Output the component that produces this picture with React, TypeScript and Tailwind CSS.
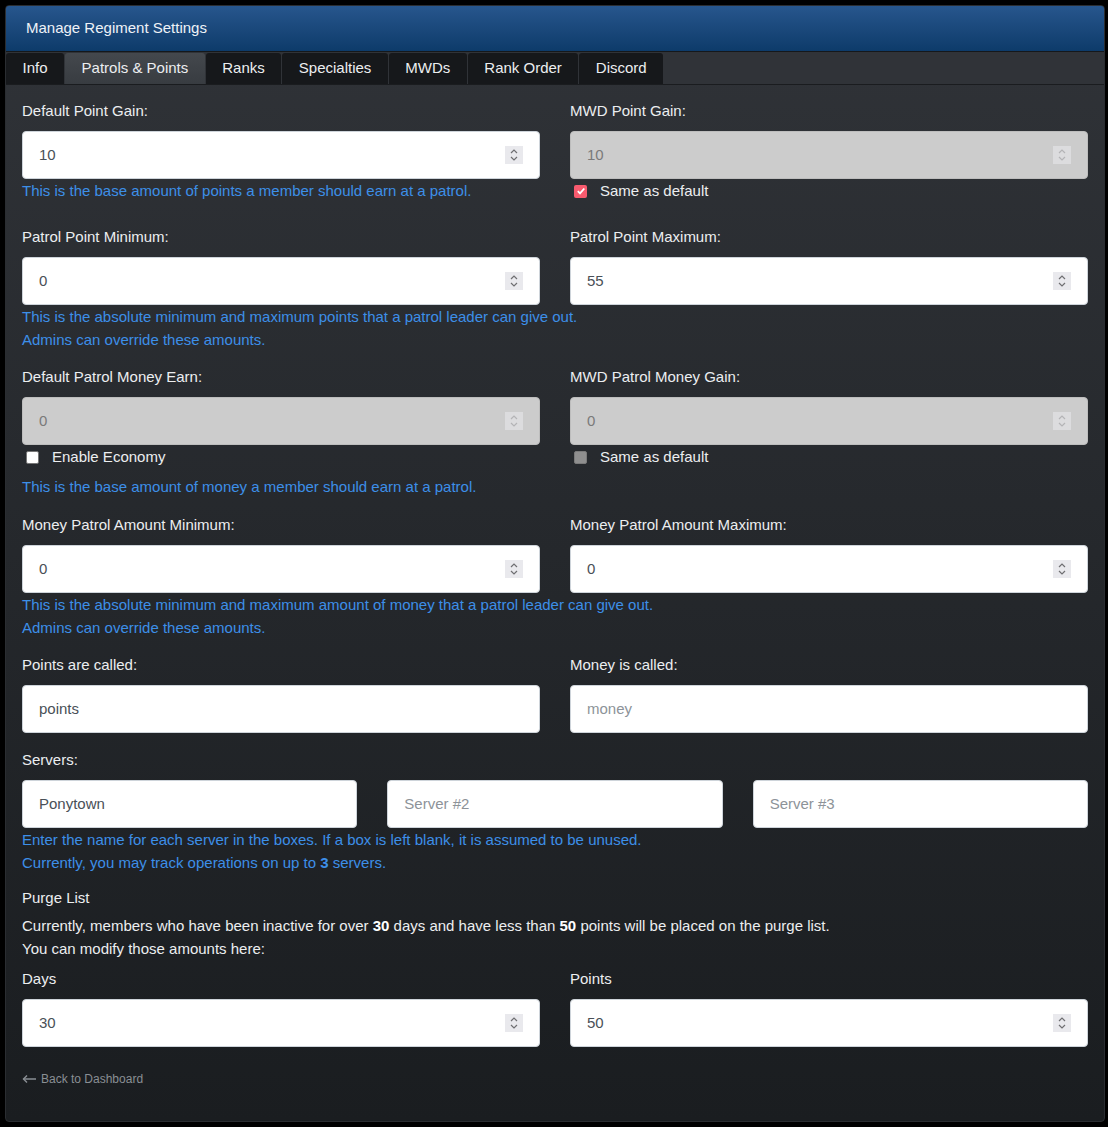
import React from "react"

const tabs = ["Info", "Patrols & Points", "Ranks", "Specialties", "MWDs", "Rank Order", "Discord"]

function Label({ children }: { children: React.ReactNode }) {
  return <label className="block text-[15px] leading-[23px] mb-[9px] text-[#eceef0]">{children}</label>
}

function Help({ children }: { children: React.ReactNode }) {
  return <p className="text-[15px] leading-[23px] text-[#3d8fe8]">{children}</p>
}

function Spinner({ disabled }: { disabled?: boolean }) {
  return (
    <span className={`flex h-[18px] w-[18px] items-center justify-center ${disabled ? "bg-[#dcdcde]" : "bg-[#e9e9ed]"}`}>
      <svg width="10" height="14" viewBox="0 0 10 14" fill="none" stroke={disabled ? "#b4b4b6" : "#6f6f72"} strokeWidth="1.2">
        <path d="M2 5 L5 2 L8 5" />
        <path d="M2 9 L5 12 L8 9" />
      </svg>
    </span>
  )
}

function NumberInput({ value, disabled }: { value: string; disabled?: boolean }) {
  return (
    <div
      className={`flex h-[48px] items-center justify-between rounded-[4px] border pl-4 pr-4 text-[15px] ${
        disabled ? "border-[#bdbdbd] bg-[#cccccc] text-[#7a7a7a]" : "border-[#ced4da] bg-white text-[#495057]"
      }`}
    >
      <span>{value}</span>
      <Spinner disabled={disabled} />
    </div>
  )
}

function TextInput({ value, placeholder }: { value?: string; placeholder?: string }) {
  return (
    <div className="flex h-[48px] items-center rounded-[4px] border border-[#ced4da] bg-white pl-4 text-[15px]">
      {value ? <span className="text-[#495057]">{value}</span> : <span className="text-[#8d9399]">{placeholder}</span>}
    </div>
  )
}

function Check({ state, label }: { state: "checked" | "unchecked" | "disabled"; label: string }) {
  return (
    <div className="flex h-[23px] items-center gap-[13px] pl-1 pt-px text-[15px] text-[#eceef0]">
      {state === "checked" && (
        <span className="flex h-[13px] w-[13px] items-center justify-center rounded-[2px] bg-[#f85b6f]">
          <svg width="10" height="10" viewBox="0 0 10 10" fill="none" stroke="white" strokeWidth="1.8">
            <path d="M1.8 5.2 L4 7.4 L8.3 2.5" />
          </svg>
        </span>
      )}
      {state === "unchecked" && <span className="h-[13px] w-[13px] rounded-[2px] border border-[#767676] bg-white" />}
      {state === "disabled" && <span className="h-[13px] w-[13px] rounded-[2px] border border-[#7a7a7a] bg-[#8f8f8f]" />}
      <span>{label}</span>
    </div>
  )
}

export default function App() {
  return (
    <div className="min-h-screen bg-black p-[5px] font-['Liberation_Sans',Arial,sans-serif]">
      <div className="w-[1100px] overflow-hidden rounded-[4px] border border-[#2a2d31] bg-gradient-to-b from-[#303338] to-[#1a1d20]">
        <div className="flex h-[46px] items-center border-b border-[#15181b] bg-gradient-to-b from-[#27568d] to-[#0d3b6a] px-5 text-[15px] text-[#eef2f7]">
          Manage Regiment Settings
        </div>

        <div className="flex h-[33px] items-end gap-px border-b border-[#1a1c1f] bg-[#303338]">
          {tabs.map((t) => (
            <div
              key={t}
              className={`flex h-[31px] items-center rounded-t-[3px] px-[16.5px] text-[15px] text-[#eceef0] ${
                t === "Patrols & Points" ? "bg-gradient-to-b from-[#44484d] to-[#383c41]" : "bg-[#16181b]"
              }`}
            >
              {t}
            </div>
          ))}
        </div>

        <div className="px-4 pt-[14px] pb-[33px]">
          <div className="grid grid-cols-2 gap-x-[30px]">
            <div>
              <Label>Default Point Gain:</Label>
              <NumberInput value="10" />
              <Help>This is the base amount of points a member should earn at a patrol.</Help>
            </div>
            <div>
              <Label>MWD Point Gain:</Label>
              <NumberInput value="10" disabled />
              <Check state="checked" label="Same as default" />
            </div>
          </div>

          <div className="mt-[23px] grid grid-cols-2 gap-x-[30px]">
            <div>
              <Label>Patrol Point Minimum:</Label>
              <NumberInput value="0" />
            </div>
            <div>
              <Label>Patrol Point Maximum:</Label>
              <NumberInput value="55" />
            </div>
          </div>
          <Help>This is the absolute minimum and maximum points that a patrol leader can give out.</Help>
          <Help>Admins can override these amounts.</Help>

          <div className="mt-[14px] grid grid-cols-2 gap-x-[30px]">
            <div>
              <Label>Default Patrol Money Earn:</Label>
              <NumberInput value="0" disabled />
              <Check state="unchecked" label="Enable Economy" />
            </div>
            <div>
              <Label>MWD Patrol Money Gain:</Label>
              <NumberInput value="0" disabled />
              <Check state="disabled" label="Same as default" />
            </div>
          </div>
          <div className="mt-[7px]">
            <Help>This is the base amount of money a member should earn at a patrol.</Help>
          </div>

          <div className="mt-[15px] grid grid-cols-2 gap-x-[30px]">
            <div>
              <Label>Money Patrol Amount Minimum:</Label>
              <NumberInput value="0" />
            </div>
            <div>
              <Label>Money Patrol Amount Maximum:</Label>
              <NumberInput value="0" />
            </div>
          </div>
          <Help>This is the absolute minimum and maximum amount of money that a patrol leader can give out.</Help>
          <Help>Admins can override these amounts.</Help>

          <div className="mt-[14px] grid grid-cols-2 gap-x-[30px]">
            <div>
              <Label>Points are called:</Label>
              <TextInput value="points" />
            </div>
            <div>
              <Label>Money is called:</Label>
              <TextInput placeholder="money" />
            </div>
          </div>

          <div className="mt-[15px]">
            <Label>Servers:</Label>
            <div className="grid grid-cols-3 gap-x-[30px]">
              <TextInput value="Ponytown" />
              <TextInput placeholder="Server #2" />
              <TextInput placeholder="Server #3" />
            </div>
            <Help>Enter the name for each server in the boxes. If a box is left blank, it is assumed to be unused.</Help>
            <Help>
              Currently, you may track operations on up to <b>3</b> servers.
            </Help>
          </div>

          <p className="mt-[12px] text-[15px] leading-[23px] text-[#eceef0]">Purge List</p>
          <div className="mt-[5px] text-[15px] leading-[23px] text-[#eceef0]">
            <p>
              Currently, members who have been inactive for over <b className="text-white">30</b> days and have less
              than <b className="text-white">50</b> points will be placed on the purge list.
            </p>
            <p>You can modify those amounts here:</p>
          </div>

          <div className="mt-[7px] grid grid-cols-2 gap-x-[30px]">
            <div>
              <Label>Days</Label>
              <NumberInput value="30" />
            </div>
            <div>
              <Label>Points</Label>
              <NumberInput value="50" />
            </div>
          </div>

          <a href="#" className="mt-[23px] flex items-center gap-1 text-[12px] leading-[18px] text-[#8a8f94]">
            <svg width="15" height="10" viewBox="0 0 15 10" fill="none" stroke="#8a8f94" strokeWidth="1.4">
              <path d="M14 5 H1.5" />
              <path d="M5 1.5 L1.5 5 L5 8.5" />
            </svg>
            Back to Dashboard
          </a>
        </div>
      </div>
    </div>
  )
}
